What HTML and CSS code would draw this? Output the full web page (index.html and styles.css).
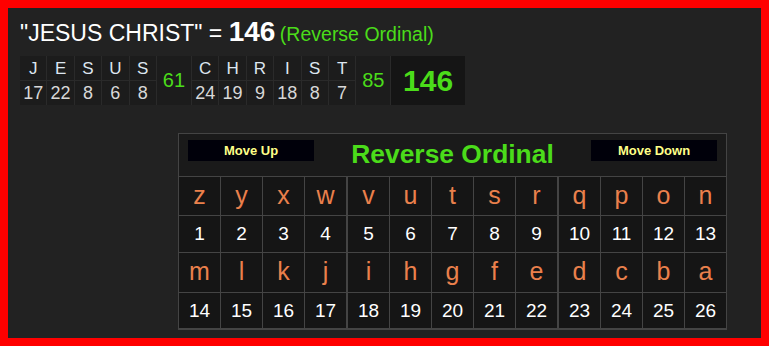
FILE: index.html
```html
<!DOCTYPE html>
<html>
<head>
<meta charset="utf-8">
<link rel="stylesheet" href="styles.css">
</head>
<body>
<div class="frame">
  <div class="title"><span class="phrase">"JESUS CHRIST" = </span><span class="total">146</span> <span class="cipher">(Reverse Ordinal)</span></div>

  <div class="breakdown">
    <div class="col"><div class="ltr">J</div><div class="num">17</div></div>
    <div class="col"><div class="ltr">E</div><div class="num">22</div></div>
    <div class="col"><div class="ltr">S</div><div class="num">8</div></div>
    <div class="col"><div class="ltr">U</div><div class="num">6</div></div>
    <div class="col"><div class="ltr">S</div><div class="num">8</div></div>
    <div class="sum">61</div>
    <div class="col"><div class="ltr">C</div><div class="num">24</div></div>
    <div class="col"><div class="ltr">H</div><div class="num">19</div></div>
    <div class="col"><div class="ltr">R</div><div class="num">9</div></div>
    <div class="col"><div class="ltr">I</div><div class="num">18</div></div>
    <div class="col"><div class="ltr">S</div><div class="num">8</div></div>
    <div class="col"><div class="ltr">T</div><div class="num">7</div></div>
    <div class="sum">85</div>
    <div class="grand">146</div>
  </div>

  <div class="panel">
    <div class="panel-head">
      <div class="btn">Move Up</div>
      <div class="panel-title">Reverse Ordinal</div>
      <div class="btn">Move Down</div>
    </div>
    <div class="groups">
      <div class="grp four">
        <div class="l">z</div><div class="l">y</div><div class="l">x</div><div class="l">w</div>
        <div class="n">1</div><div class="n">2</div><div class="n">3</div><div class="n">4</div>
        <div class="l">m</div><div class="l">l</div><div class="l">k</div><div class="l">j</div>
        <div class="n">14</div><div class="n">15</div><div class="n">16</div><div class="n">17</div>
      </div>
      <div class="grp five">
        <div class="l">v</div><div class="l">u</div><div class="l">t</div><div class="l">s</div><div class="l">r</div>
        <div class="n">5</div><div class="n">6</div><div class="n">7</div><div class="n">8</div><div class="n">9</div>
        <div class="l">i</div><div class="l">h</div><div class="l">g</div><div class="l">f</div><div class="l">e</div>
        <div class="n">18</div><div class="n">19</div><div class="n">20</div><div class="n">21</div><div class="n">22</div>
      </div>
      <div class="grp four">
        <div class="l">q</div><div class="l">p</div><div class="l">o</div><div class="l">n</div>
        <div class="n">10</div><div class="n">11</div><div class="n">12</div><div class="n">13</div>
        <div class="l">d</div><div class="l">c</div><div class="l">b</div><div class="l">a</div>
        <div class="n">23</div><div class="n">24</div><div class="n">25</div><div class="n">26</div>
      </div>
    </div>
  </div>
</div>
</body>
</html>
```

FILE: styles.css
```css
html, body {
  margin: 0;
  padding: 0;
  background: #222;
}

.frame {
  box-sizing: border-box;
  width: 769px;
  height: 346px;
  border: 8px solid #ff0000;
  background: #222;
  padding: 10px 0 0 12px;
  font-family: "Liberation Sans", Arial, sans-serif;
}

.title {
  height: 28px;
  line-height: 28px;
  white-space: nowrap;
}

.phrase {
  color: #fff;
  font-size: 23px;
}

.total {
  color: #fff;
  font-size: 28px;
  font-weight: bold;
}

.cipher {
  color: #4bdc1a;
  font-size: 19.5px;
}

.breakdown {
  margin-top: 10px;
  display: flex;
  width: 445px;
  height: 49px;
  background: #2a2a2a;
  gap: 1px;
}

.col {
  width: 26.4px;
  display: flex;
  flex-direction: column;
  gap: 1px;
}

.ltr {
  height: 24px;
  line-height: 26px;
  background: #1c1c1c;
  color: #dde6f0;
  font-size: 17px;
  text-align: center;
}

.num {
  height: 24px;
  line-height: 24px;
  background: #1c1c1c;
  color: #d8d8d8;
  font-size: 18px;
  text-align: center;
}

.sum {
  width: 34px;
  background: #1c1c1c;
  color: #4bdc1a;
  font-size: 20px;
  line-height: 49px;
  text-align: center;
}

.grand {
  flex: 1;
  background: #151515;
  color: #4bdc1a;
  font-size: 30px;
  font-weight: bold;
  line-height: 49px;
  text-align: center;
}

.panel {
  margin: 28px 0 0 158px;
  width: 549px;
}

.panel-head {
  box-sizing: border-box;
  height: 43px;
  border: 1px solid #444;
  border-bottom: none;
  background: #1a1a1a;
  display: flex;
  justify-content: space-between;
  align-items: flex-start;
  padding: 6px 9px 0 9px;
}

.btn {
  width: 126px;
  height: 21px;
  line-height: 21px;
  background: #00000a;
  color: #ffff88;
  font-size: 13px;
  font-weight: bold;
  text-align: center;
}

.panel-title {
  color: #4bdc1a;
  font-size: 26.4px;
  font-weight: bold;
  line-height: 29px;
}

.groups {
  display: flex;
  border-bottom: 1px solid #444;
}

.grp {
  display: grid;
  grid-template-rows: 38px 36px 39px 35px;
  gap: 1px;
  padding: 1px;
  background: #444;
}

.grp.four {
  grid-template-columns: repeat(4, 41px);
}

.grp.five {
  grid-template-columns: repeat(5, 41px);
}

.l, .n {
  background: #151515;
  display: flex;
  align-items: center;
  justify-content: center;
}

.l {
  color: #ea804c;
  font-size: 25px;
  padding-bottom: 2px;
}

.n {
  color: #fff;
  font-size: 19px;
}
```
